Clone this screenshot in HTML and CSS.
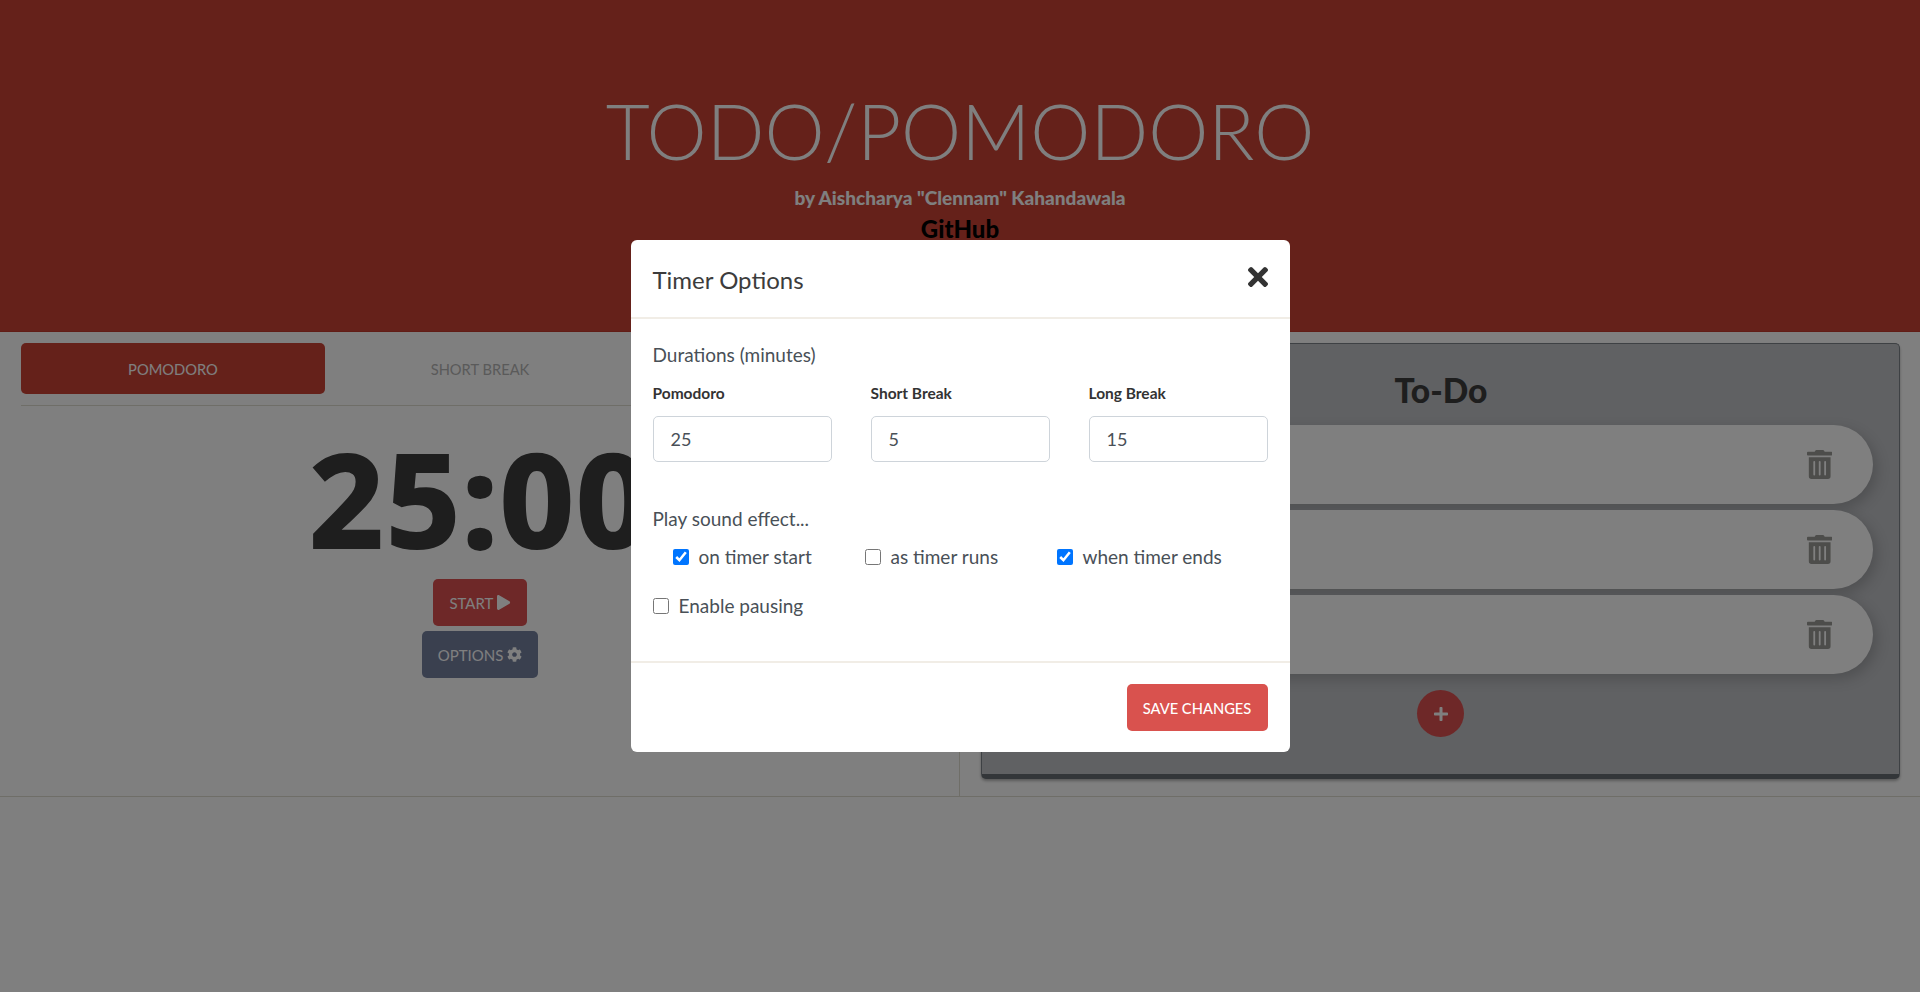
FILE: index.html
```html
<!DOCTYPE html>
<html lang="en">
<head>
  <meta charset="UTF-8" />
  <title>Todo/Pomodoro</title>
  <link rel="stylesheet" href="styles.css">
</head>
<body>

  <!-- ========== HEADER ========== -->
  <header class="hero">
    <h1 class="hero-title">TODO/POMODORO</h1>
    <p class="hero-by">by Aishcharya "Clennam" Kahandawala</p>
    <a class="hero-link" href="#">GitHub</a>
  </header>

  <!-- ========== MAIN COLUMNS ========== -->
  <main class="columns">
    <section class="timer-col">
      <nav class="tabs">
        <a class="tab tab-active" href="#">Pomodoro</a>
        <a class="tab" href="#">Short Break</a>
        <a class="tab" href="#">Long Break</a>
      </nav>
      <div class="clock">25:00</div>
      <div class="timer-actions">
        <button class="btn btn-start">Start
          <svg class="btn-icon" viewBox="0 0 448 512"><path d="M424.4 214.7L72.4 6.6C43.8-10.3 0 6.1 0 47.9V464c0 37.5 40.7 60.1 72.4 41.3l352-208c31.4-18.5 31.5-64.1 0-82.6z"/></svg>
        </button>
        <button class="btn btn-options">Options
          <svg class="btn-icon" viewBox="0 0 512 512"><path d="M487.4 315.7l-42.6-24.6c4.3-23.2 4.3-47 0-70.2l42.6-24.6c4.9-2.8 7.1-8.6 5.5-14-11.1-35.6-30-67.8-54.7-94.6-3.8-4.1-10-5.1-14.8-2.3L380.8 110c-17.9-15.4-38.5-27.3-60.8-35.1V25.8c0-5.6-3.9-10.5-9.4-11.7-36.7-8.2-74.3-7.8-109.2 0-5.5 1.2-9.4 6.1-9.4 11.7V75c-22.2 7.9-42.8 19.8-60.8 35.1L88.7 85.5c-4.9-2.8-11-1.9-14.8 2.3-24.7 26.7-43.6 58.9-54.7 94.6-1.7 5.4.6 11.2 5.5 14L67.3 221c-4.3 23.2-4.3 47 0 70.2l-42.6 24.6c-4.9 2.8-7.1 8.6-5.5 14 11.1 35.6 30 67.8 54.7 94.6 3.8 4.1 10 5.1 14.8 2.3l42.6-24.6c17.9 15.4 38.5 27.3 60.8 35.1v49.2c0 5.6 3.9 10.5 9.4 11.7 36.7 8.2 74.3 7.8 109.2 0 5.5-1.2 9.4-6.1 9.4-11.7v-49.2c22.2-7.9 42.8-19.8 60.8-35.1l42.6 24.6c4.9 2.8 11 1.9 14.8-2.3 24.7-26.7 43.6-58.9 54.7-94.6 1.5-5.5-.7-11.3-5.6-14.1zM256 336c-44.1 0-80-35.9-80-80s35.9-80 80-80 80 35.9 80 80-35.9 80-80 80z"/></svg>
        </button>
      </div>
    </section>

    <section class="todo-col">
      <div class="todo-card">
        <h2 class="todo-title">To-Do</h2>
        <div class="todo-item">
          <svg class="trash" viewBox="0 0 448 512"><path d="M32 464a48 48 0 0 0 48 48h288a48 48 0 0 0 48-48V128H32zm272-256a16 16 0 0 1 32 0v224a16 16 0 0 1-32 0zm-96 0a16 16 0 0 1 32 0v224a16 16 0 0 1-32 0zm-96 0a16 16 0 0 1 32 0v224a16 16 0 0 1-32 0zM432 32H312l-9.4-18.7A24 24 0 0 0 281.1 0H166.8a23.72 23.72 0 0 0-21.4 13.3L136 32H16A16 16 0 0 0 0 48v32a16 16 0 0 0 16 16h416a16 16 0 0 0 16-16V48a16 16 0 0 0-16-16z"/></svg>
        </div>
        <div class="todo-item">
          <svg class="trash" viewBox="0 0 448 512"><path d="M32 464a48 48 0 0 0 48 48h288a48 48 0 0 0 48-48V128H32zm272-256a16 16 0 0 1 32 0v224a16 16 0 0 1-32 0zm-96 0a16 16 0 0 1 32 0v224a16 16 0 0 1-32 0zm-96 0a16 16 0 0 1 32 0v224a16 16 0 0 1-32 0zM432 32H312l-9.4-18.7A24 24 0 0 0 281.1 0H166.8a23.72 23.72 0 0 0-21.4 13.3L136 32H16A16 16 0 0 0 0 48v32a16 16 0 0 0 16 16h416a16 16 0 0 0 16-16V48a16 16 0 0 0-16-16z"/></svg>
        </div>
        <div class="todo-item">
          <svg class="trash" viewBox="0 0 448 512"><path d="M32 464a48 48 0 0 0 48 48h288a48 48 0 0 0 48-48V128H32zm272-256a16 16 0 0 1 32 0v224a16 16 0 0 1-32 0zm-96 0a16 16 0 0 1 32 0v224a16 16 0 0 1-32 0zm-96 0a16 16 0 0 1 32 0v224a16 16 0 0 1-32 0zM432 32H312l-9.4-18.7A24 24 0 0 0 281.1 0H166.8a23.72 23.72 0 0 0-21.4 13.3L136 32H16A16 16 0 0 0 0 48v32a16 16 0 0 0 16 16h416a16 16 0 0 0 16-16V48a16 16 0 0 0-16-16z"/></svg>
        </div>
        <button class="add-btn">
          <svg class="add-icon" viewBox="0 0 448 512"><path d="M416 208H272V64c0-17.67-14.33-32-32-32h-32c-17.67 0-32 14.33-32 32v144H32c-17.67 0-32 14.33-32 32v32c0 17.67 14.33 32 32 32h144v144c0 17.67 14.33 32 32 32h32c17.67 0 32-14.33 32-32V304h144c17.67 0 32-14.33 32-32v-32c0-17.67-14.33-32-32-32z"/></svg>
        </button>
      </div>
    </section>
  </main>

  <!-- ========== OPTIONS MODAL ========== -->
  <div class="backdrop">
    <div class="modal">
      <div class="modal-header">
        <h3 class="modal-title">Timer Options</h3>
        <svg class="modal-close" viewBox="0 80 352 352"><path d="M242.72 256l100.07-100.07c12.28-12.28 12.28-32.19 0-44.48l-22.24-22.24c-12.28-12.28-32.19-12.28-44.48 0L176 189.28 75.93 89.21c-12.28-12.28-32.19-12.28-44.48 0L9.21 111.45c-12.28 12.28-12.28 32.19 0 44.48L109.28 256 9.21 356.07c-12.28 12.28-12.28 32.19 0 44.48l22.24 22.24c12.28 12.28 32.2 12.28 44.48 0L176 322.72l100.07 100.07c12.28 12.28 32.2 12.28 44.48 0l22.24-22.24c12.28-12.28 12.28-32.19 0-44.48L242.72 256z"/></svg>
      </div>
      <div class="modal-body">
        <div class="section-label">Durations (minutes)</div>
        <div class="duration-grid">
          <label class="duration">Pomodoro<input type="text" value="25"></label>
          <label class="duration">Short Break<input type="text" value="5"></label>
          <label class="duration">Long Break<input type="text" value="15"></label>
        </div>
        <div class="section-label sound-label">Play sound effect...</div>
        <div class="sound-grid">
          <label class="check"><input type="checkbox" checked>on timer start</label>
          <label class="check"><input type="checkbox">as timer runs</label>
          <label class="check"><input type="checkbox" checked>when timer ends</label>
        </div>
        <label class="check pausing"><input type="checkbox">Enable pausing</label>
      </div>
      <div class="modal-footer">
        <button class="btn-save">Save Changes</button>
      </div>
    </div>
  </div>

</body>
</html>
```

FILE: styles.css
```css
* { box-sizing: border-box; }
body {
  margin: 0;
  font-family: 'Lato', sans-serif;
  color: #333;
  background: #fff;
}

/* ---------- HEADER ---------- */
.hero { height: 332px; background: #cb4335; display: flex; flex-direction: column; align-items: center; padding-top: 87px; border-bottom: 1px solid #c23a2c; }
.hero-title { margin: 0; font-size: 76px; font-weight: 300; line-height: 88px; color: #fff; }
.hero-by { margin: 10px 0 0; font-size: 19px; font-weight: 900; line-height: 26px; color: #fff; }
.hero-link { margin-top: 5px; font-size: 24px; font-weight: 900; line-height: 26px; color: #000; text-decoration: none; }

/* ---------- COLUMNS ---------- */
.columns { display: grid; grid-template-columns: 960px 960px; height: 465px; border-bottom: 1px solid #dfdcd0; }
.timer-col { padding: 11px 20px 0 21px; border-right: 1px solid #dfdcd0; display: flex; flex-direction: column; align-items: center; }
.todo-col { padding: 11px 20px 0 21px; }

/* ---------- TIMER ---------- */
.tabs { width: 100%; display: grid; grid-template-columns: repeat(3, 1fr); gap: 3px; padding-bottom: 11px; border-bottom: 1px solid #dfdcd0; }
.tab { height: 51px; display: flex; align-items: center; justify-content: center; font-size: 14.7px; text-transform: uppercase; text-decoration: none; color: #b4b4b4; border-radius: 5px; }
.tab-active { background: #cb4335; color: #fff; }
.clock { font-family: 'Noto Sans', sans-serif; font-size: 132px; font-weight: 800; line-height: 154px; color: #3c3c3c; margin-top: 15px; margin-bottom: -1px; }
.timer-actions { display: flex; flex-direction: column; align-items: center; gap: 5px; margin-top: 5px; }
.btn { height: 47px; padding: 0 16px; display: flex; align-items: center; gap: 4px; border: none; border-radius: 5px; font-family: inherit; font-size: 15px; text-transform: uppercase; color: #fff; }
.btn-start { background: #dc5050; }
.btn-options { background: #74809f; }
.btn-icon { height: 15px; fill: #fff; }

/* ---------- TO-DO CARD ---------- */
.todo-card { height: 436px; background: #c0c2c6; border: 1px solid #7c8288; border-bottom: 5px solid #666d72; border-radius: 5px; padding: 0 26px 0 27px; box-shadow: 0 2px 3px rgba(0,0,0,.3); display: flex; flex-direction: column; align-items: center; }
.todo-title { margin: 0; height: 81px; font-size: 33.6px; font-weight: 900; line-height: 92px; color: #3c3c3c; }
.todo-item { width: 100%; height: 79px; margin-bottom: 6px; padding-right: 41px; display: flex; align-items: center; justify-content: flex-end; background: #fff; border-radius: 40px; box-shadow: 4px 5px 14px rgba(0,0,0,.18); }
.trash { height: 29px; fill: #9a9a96; }
.add-btn { width: 47px; height: 47px; margin: 10px 1px 0 0; padding: 0; display: flex; align-items: center; justify-content: center; border: none; border-radius: 50%; background: #dc5050; }
.add-icon { height: 16px; fill: #fff; }

/* ---------- MODAL ---------- */
.backdrop { position: fixed; inset: 0; background: rgba(0,0,0,.5); display: flex; justify-content: center; align-items: flex-start; padding-top: 240px; }
.modal { width: 659px; background: #fff; border-radius: 6px; }
.modal-header { height: 79px; padding: 26px 22px 0; display: flex; justify-content: space-between; align-items: flex-start; border-bottom: 2px solid #f1ede6; }
.modal-title { margin: 0; font-size: 24px; font-weight: 400; line-height: 27px; color: #3c3c3c; }
.modal-close { width: 20px; height: 20px; margin-top: 1px; fill: #333; }
.modal-body { height: 342px; padding: 24px 22px 0; color: #495057; }
.section-label { font-size: 19px; line-height: 24px; }
.duration-grid { display: grid; grid-template-columns: repeat(3, 179px); justify-content: space-between; margin-top: 17px; }
.duration { display: flex; flex-direction: column; gap: 13px; font-size: 15.5px; font-weight: 700; line-height: 19px; color: #333; }
.duration input { width: 100%; height: 46px; padding: 0 17px; border: 1px solid #ced4da; border-radius: 5px; font-family: inherit; font-size: 18px; color: #495057; }
.sound-label { margin-top: 45px; }
.sound-grid { display: grid; grid-template-columns: repeat(3, 192px); margin-top: 14px; padding-left: 20px; }
.check { display: flex; align-items: center; gap: 10px; font-size: 19px; line-height: 24px; color: #495057; }
.check input { width: 16px; height: 16px; margin: 0; }
.pausing { margin-top: 25px; }
.modal-footer { height: 91px; padding: 21px 22px 0; display: flex; justify-content: flex-end; border-top: 2px solid #f1ede6; }
.btn-save { width: 141px; height: 47px; border: none; border-radius: 5px; background: #d9524e; color: #fff; font-family: inherit; font-size: 14.7px; font-weight: 500; text-transform: uppercase; }
```
